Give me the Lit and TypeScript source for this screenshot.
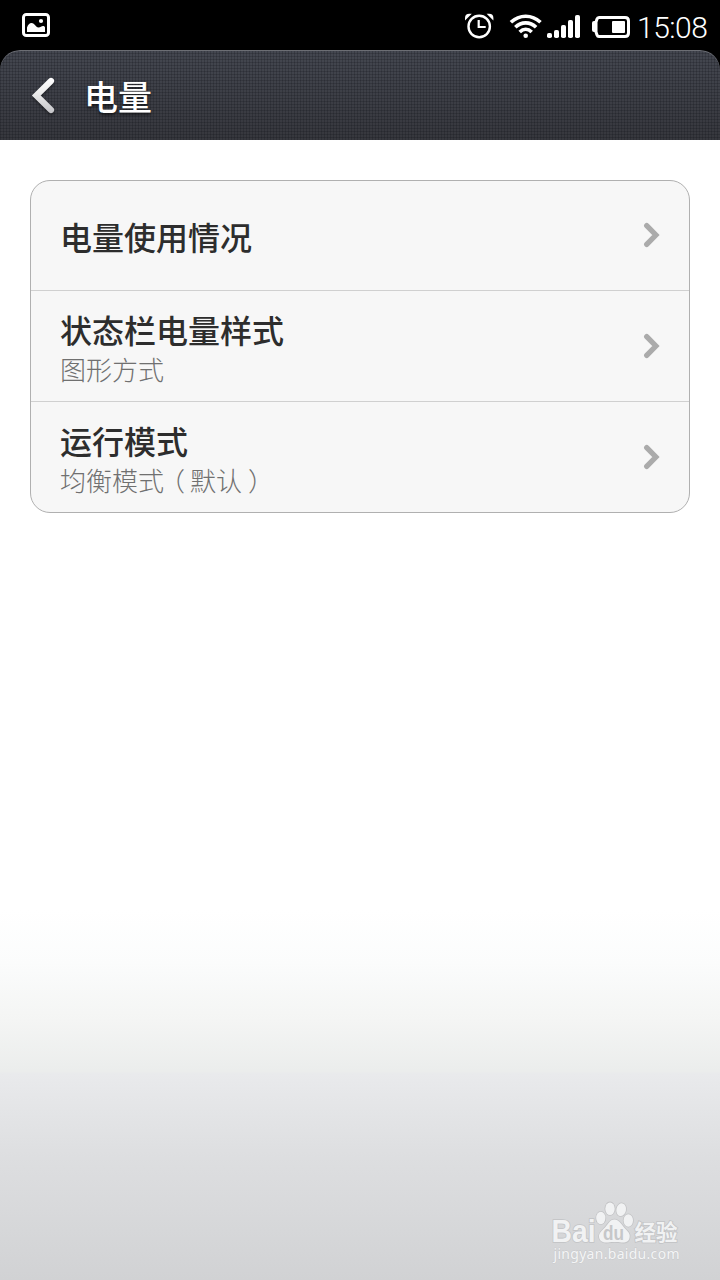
import { LitElement, html, css, svg } from "lit";
import { customElement, property } from "lit/decorators.js";

@customElement("status-bar")
class StatusBar extends LitElement {
  static styles = css`
    :host { display: flex; height: 50px; background: #000; color: #fff; }
    .shot { margin: 0 auto 0 0; width: 60px; height: 50px; }
    .signals { width: 176px; height: 50px; }
    .clock { width: 84px; box-sizing: border-box; padding: 3px 0 0 1px; line-height: 50px; font-family: Roboto, "Noto Sans", sans-serif; font-size: 30px; font-weight: 300; letter-spacing: -0.5px; white-space: nowrap; }
    svg { display: block; }
  `;
  render() {
    return html`
      <svg class="shot" viewBox="0 0 60 50">
        <rect x="23.5" y="14.5" width="25" height="21" rx="2.800" fill="none" stroke="#fff" stroke-width="3" />
        <path d="M27 32v-4.500c1-3 2.500-4.500 4.500-4.500 3.500 0 4 4.500 7 4.500 2 0 3-1.500 4.500-1.500.900 0 2 .500 2 1.500V32z" fill="#fff" />
        <circle cx="41" cy="21" r="2.100" fill="#fff" />
      </svg>
      <svg class="signals" viewBox="460 0 176 50" fill="none" stroke="#fff">
        <circle cx="479.200" cy="26.500" r="10.700" stroke-width="2.400" />
        <path d="M478.700 20v7h7" stroke-width="2.200" />
        <path d="M465 20.500v-2.500a4.300 4.300 0 0 1 4.300-4.200h2.500zM493.400 20.500v-2.500a4.300 4.300 0 0 0-4.300-4.200h-2.500z" fill="#fff" stroke="none" />
        <g stroke-width="3.600">
          <path d="M510.900 22.300c8.600-8.100 21-8.100 29.600 0" />
          <path d="M515.300 27.300c6-5.900 14.800-5.900 20.800 0" />
          <path d="M519.700 32c3.700-3.700 8.300-3.700 12 0" />
        </g>
        <circle cx="525.700" cy="35.800" r="2.300" fill="#fff" stroke="none" />
        <g fill="#fff" stroke="none">
          ${[[547, 33], [554, 30], [561, 25], [568, 20], [575, 15]].map(
            ([x, y]) => svg`<rect x=${x} y=${y} width="5" height=${38 - y} rx="1.800" />`
          )}
          <path d="M595.500 21h-1.500q-2 0-2 2v7q0 2 2 2h1.500z" />
          <rect x="612" y="21" width="13" height="12" rx="1" />
        </g>
        <path d="M599 17.500h26q3.500 0 3.500 3.500v12q0 3.500-3.500 3.500h-26q-1.500 0-2-1.500l-1-3v-10l1-3q.500-1.500 2-1.500z" stroke-width="3" />
      </svg>
      <div class="clock">15:08</div>
    `;
  }
}

@customElement("title-bar")
class TitleBar extends LitElement {
  static styles = css`
    :host { display: block; background: #000; height: 90px; }
    .bar {
      display: flex; align-items: center; height: 90px; box-sizing: border-box;
      border-radius: 20px 20px 0 0; color: #fff;
      box-shadow: inset 0 1px 0 #6c6e74;
      background:
        repeating-linear-gradient(90deg, rgba(10, 12, 18, .2) 0 1px, transparent 1px 3px),
        repeating-linear-gradient(180deg, rgba(10, 12, 18, .2) 0 1px, transparent 1px 3px),
        linear-gradient(#444750, #36373d);
    }
    .back { width: 84px; height: 90px; filter: drop-shadow(0 2px 1px rgba(0, 0, 0, .35)); }
    .title { padding-top: 2px; font: 500 34px/50px "Noto Sans CJK SC", sans-serif; text-shadow: 0 2px 3px rgba(0, 0, 0, .6); }
  `;
  render() {
    return html`
      <div class="bar">
        <svg class="back" viewBox="0 50 84 90">
          <defs>
            <linearGradient id="g" x1="0" y1="78" x2="0" y2="113" gradientUnits="userSpaceOnUse">
              <stop offset="0" stop-color="#fff" /><stop offset=".4" stop-color="#eee" /><stop offset="1" stop-color="#c4c4c8" />
            </linearGradient>
          </defs>
          <path d="M51 81L36.300 95.500L51 110" fill="none" stroke="url(#g)" stroke-width="6.200" stroke-linecap="round" />
        </svg>
        <div class="title">电量</div>
      </div>
    `;
  }
}

@customElement("setting-row")
class SettingRow extends LitElement {
  @property() label = "";
  static styles = css`
    :host { display: flex; align-items: center; justify-content: space-between; height: 110px; padding: 0 29px; }
    .text { display: flex; flex-direction: column; font-family: "Noto Sans CJK SC", sans-serif; }
    .label { font-size: 32px; line-height: 40px; font-weight: 500; color: #2d2d2d; }
    .sub { font-size: 26px; line-height: 38px; font-weight: 300; color: #707070; }
    .sub.filled { padding-top: 1px; margin-bottom: -4px; }
    .chevron { display: block; width: 18px; height: 28px; }
    .chevron.raised { margin-bottom: 1px; }
  `;
  private get filled() {
    return this.childNodes.length > 0;
  }
  render() {
    return html`
      <div class="text">
        <div class="label">${this.label}</div>
        <div class="sub ${this.filled ? "filled" : ""}"><slot></slot></div>
      </div>
      <svg class="chevron ${this.filled ? "" : "raised"}" viewBox="0 0 18 28"><path d="M4.700 4.600L13.900 14L4.700 23.400" fill="none" stroke="#ababab" stroke-width="5.300" stroke-linecap="round" /></svg>
    `;
  }
}

@customElement("site-mark")
class SiteMark extends LitElement {
  static styles = css`
    :host { display: block; width: 136px; height: 66px; }
    svg { display: block; }
    .solid { fill: #f1f2f3; stroke: #c2c3c5; stroke-width: 1.600px; paint-order: stroke; }
    .latin { font: 700 30.500px "Liberation Sans", sans-serif; }
    .du { font: 700 21px "Liberation Sans", sans-serif; fill: #c6c7c9; }
    .cjk { font: 700 21.500px "Noto Sans CJK SC", sans-serif; }
    .url { font: 400 14px "Noto Sans", sans-serif; fill: #f4f5f6; stroke: #c6c7c9; stroke-width: .8px; paint-order: stroke; }
  `;
  render() {
    return html`
      <svg width="136" height="66" viewBox="550 1200 136 66">
        <text class="solid latin" x="551.500" y="1242" textLength="44" lengthAdjust="spacingAndGlyphs">Bai</text>
        <g class="solid">
          <ellipse cx="600.800" cy="1218" rx="4.600" ry="6.200" />
          <ellipse cx="610" cy="1208.700" rx="4.700" ry="6.300" />
          <ellipse cx="621.200" cy="1209.700" rx="4.800" ry="6.400" transform="rotate(12 621.200 1209.700)" />
          <ellipse cx="628.300" cy="1220.500" rx="4.700" ry="6.200" />
          <path d="M614.500 1219.500c5 0 7 5.500 10.500 9 3.500 3.500 5.500 5.500 4.500 9.500-1 4-4.500 5-8 4.500-4.500-.600-9-.600-13.500 0-4.500.600-8.500-1-9-5.500-.300-4 3-6.500 6-9.500 3-3 4.500-8 9.500-8z" />
        </g>
        <text class="du" x="603" y="1240" textLength="21" lengthAdjust="spacingAndGlyphs">du</text>
        <text class="solid cjk" x="634.500" y="1240">经验</text>
        <text class="url" x="553.500" y="1259" textLength="126">jingyan.baidu.com</text>
      </svg>
    `;
  }
}

@customElement("app-root")
class AppRoot extends LitElement {
  static styles = css`
    :host { display: flex; flex-direction: column; width: 720px; height: 1280px; overflow: hidden; background: #fff; }
    .page {
      flex: 1; display: flex; flex-direction: column; padding: 40px 30px 0;
      background: linear-gradient(#fff 770px, #fbfcfc 823px, #f4f5f4 880px, #ebedec 931px, #e9eaec 934px, #dddee0 1018px, #d1d2d4 1140px);
    }
    .card { border: 1px solid #b0b0b0; border-radius: 20px; background: #f7f7f7; }
    .card > * + * { border-top: 1px solid #d0d0d0; }
    .card > .first { height: 109px; }
    .open, .close { font-feature-settings: "halt"; }
    .open { margin: 0 5px 0 8px; }
    .close { margin-left: 6px; }
    .mark { margin: auto 4px 14px auto; }
  `;
  render() {
    return html`
      <status-bar></status-bar>
      <title-bar></title-bar>
      <main class="page">
        <div class="card">
          <setting-row class="first" label="电量使用情况"></setting-row>
          <setting-row label="状态栏电量样式">图形方式</setting-row>
          <setting-row label="运行模式">均衡模式<span class="open">（</span>默认<span class="close">）</span></setting-row>
        </div>
        <site-mark class="mark"></site-mark>
      </main>
    `;
  }
}
